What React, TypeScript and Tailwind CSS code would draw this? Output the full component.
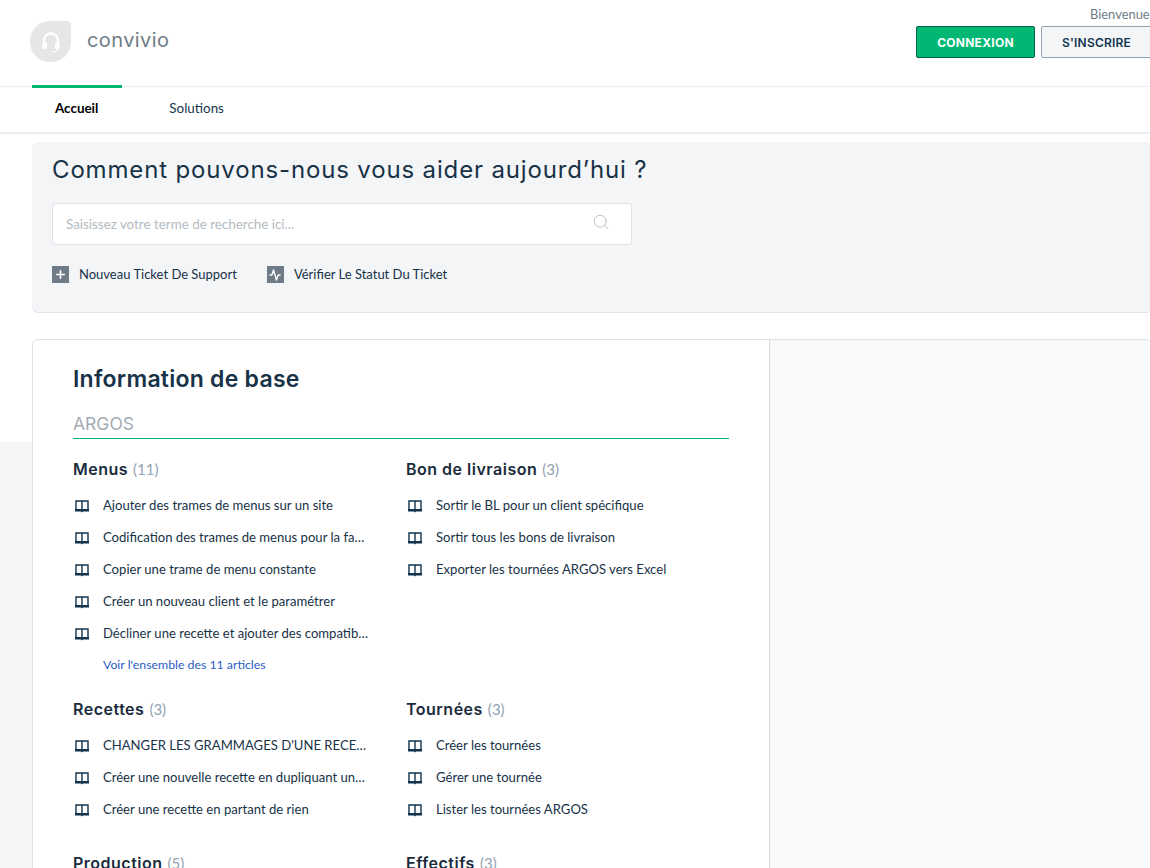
import { Plus, Search, Activity } from "lucide-react";

const body = "font-['Lato','Noto_Sans',sans-serif]";
const head = "font-['Inter','Liberation_Sans',sans-serif]";

function Book() {
  return (
    <svg width="14" height="13" viewBox="0 0 14 13" className="shrink-0 mt-[-1px]" fill="none">
      <path d="M1 1h12v9H1z" stroke="#12344d" strokeWidth="1.400" />
      <path d="M7 1v9" stroke="#12344d" strokeWidth="1.400" />
      <path d="M0 9h14v2.500H8l-1 1-1-1H0z" fill="#12344d" />
    </svg>
  );
}

function HeadsetLogo() {
  return (
    <svg width="24" height="24" viewBox="0 0 24 24" fill="none">
      <path d="M5 14V10.500a7 7 0 0 1 14 0V14" stroke="#fff" strokeWidth="2.400" />
      <rect x="3.500" y="12" width="4.500" height="7" rx="1.500" fill="#fff" />
      <rect x="16" y="12" width="4.500" height="7" rx="1.500" fill="#fff" />
      <path d="M18.500 19v1a1.500 1.500 0 0 1-1.500 1.500h-3.500" stroke="#fff" strokeWidth="1" />
    </svg>
  );
}

function Article({ text }: { text: string }) {
  return (
    <li className="flex h-8 items-center text-[13.100px] text-[#183247]">
      <span className="ml-[2px] flex w-7 shrink-0"><Book /></span>
      <span className="relative top-[-1px] w-[268px] truncate">{text}</span>
    </li>
  );
}

function Category({ title, count, items, more }: { title: string; count: number; items: string[]; more?: string }) {
  return (
    <section className="h-fit">
      <h3 className={`${head} flex h-6 items-center gap-[5px] text-[16px] font-semibold tracking-[0.5px] text-[#1a2b3c]`}>
        {title} <span className={`${body} text-[15px] font-normal tracking-normal text-[#92a2b1]`}>({count})</span>
      </h3>
      <ul className="mt-[10px]">
        {items.map((t) => <Article key={t} text={t} />)}
      </ul>
      {more && <a className="ml-[30px] block h-[22px] pt-[5px] text-[12.300px] text-[#2c5cc5]">{more}</a>}
    </section>
  );
}

export default function App() {
  return (
    <div className={`${body} h-[868px] w-[1150px] overflow-hidden bg-[linear-gradient(#ffffff_442px,#f3f5f7_442px)]`}>
      <div className="w-[1152px]">
        <header className="flex h-[87px] items-start justify-between border-b border-[#ebeff3] bg-white">
          <div className="ml-[30px] mt-[21px] flex items-center gap-[16px]">
            <div className="flex h-[41px] w-[41px] items-center justify-center rounded-[20px] rounded-tr-[4px] bg-[#e6e6e6]">
              <HeadsetLogo />
            </div>
            <span className={`${head} relative top-[-2px] text-[20px] tracking-[0.4px] text-[#6f7c87]`}>convivio</span>
          </div>
          <div className="mt-[6px] w-[236px]">
            <div className="ml-[174px] h-[20px] whitespace-nowrap text-[12.900px] leading-[16px] text-[#6f7c87]">Bienvenue</div>
            <div className="flex gap-[6px]">
              <button className={`${head} h-8 w-[119px] rounded-[2px] border border-[#065f46] bg-[#00b874] pt-[2px] text-[12px] font-bold tracking-[0.25px] text-white`}>CONNEXION</button>
              <button className={`${head} h-8 w-[111px] rounded-[2px] border border-[#92a2b1] bg-[#f3f5f7] pt-[2px] text-[12px] font-semibold tracking-[0.2px] text-[#12344d]`}>S'INSCRIRE</button>
            </div>
          </div>
        </header>

        <nav className="relative flex h-[47px] items-center border-b-2 border-[#ebeff3] bg-white pb-[2px] text-[13.400px] text-[#12344d]">
          <div className="absolute left-[32px] top-[-2px] h-[3px] w-[90px] bg-[#00b874]" />
          <a className="ml-[55px] font-bold text-black">Accueil</a>
          <a className="ml-[71px]">Solutions</a>
        </nav>

        <div className="ml-[32px] mt-[8px] h-[171px] rounded-[6px] border-b border-[#dfe3e8] bg-[#f3f5f7] pl-[20px] pt-[12px]">
          <h1 className={`${head} h-[32px] text-[24px] leading-[32px] tracking-[0.85px] text-[#183247]`}>Comment pouvons-nous vous aider aujourd’hui ?</h1>
          <div className="mt-[17px] flex h-[42px] w-[580px] items-center justify-between rounded-[4px] border border-[#dfe3e8] bg-white pl-[13px] pr-[21px] text-[13.400px] text-[#b3bbc2]">
            <span>Saisissez votre terme de recherche ici...</span>
            <Search size={18} color="#b7c1cb" strokeWidth={1.300} className="mt-[-4px]" />
          </div>
          <div className="mt-[21px] flex h-[17px] items-center text-[13px] text-[#183247]">
            <span className="flex h-[17px] w-[17px] items-center justify-center bg-[#6f7c87]"><Plus size={13} color="#fff" strokeWidth={3} /></span>
            <span className="ml-[10px]">Nouveau Ticket De Support</span>
            <span className="ml-[30px] flex h-[17px] w-[17px] items-center justify-center bg-[#6f7c87]"><Activity size={12} color="#fff" strokeWidth={2.800} /></span>
            <span className="ml-[10px]">Vérifier Le Statut Du Ticket</span>
          </div>
        </div>

        <div className="ml-[32px] mt-[26px] flex h-[600px] rounded-[6px] border border-[#dfe3e8] bg-white">
          <main className="w-[737px] border-r border-[#d8d8d8] px-[40px] pt-[24px]">
            <h2 className={`${head} h-[30px] text-[23px] font-semibold leading-[30px] tracking-[0.25px] text-[#183247]`}>Information de base</h2>
            <div className={`${head} mt-[17px] h-[28px] border-b border-[#00b874] text-[17.500px] leading-[26px] text-[#a3abb3]`}>ARGOS</div>
            <div className="mt-[18px] grid grid-cols-[333px_323px] gap-y-[24px]">
              <Category title="Menus" count={11} more="Voir l'ensemble des 11 articles" items={[
                "Ajouter des trames de menus sur un site",
                "Codification des trames de menus pour la fabrication des repas",
                "Copier une trame de menu constante",
                "Créer un nouveau client et le paramétrer",
                "Décliner une recette et ajouter des compatibilités alimentaires",
              ]} />
              <Category title="Bon de livraison" count={3} items={[
                "Sortir le BL pour un client spécifique",
                "Sortir tous les bons de livraison",
                "Exporter les tournées ARGOS vers Excel",
              ]} />
              <Category title="Recettes" count={3} items={[
                "CHANGER LES GRAMMAGES D'UNE RECETTE DE BASE",
                "Créer une nouvelle recette en dupliquant une autre",
                "Créer une recette en partant de rien",
              ]} />
              <Category title="Tournées" count={3} items={[
                "Créer les tournées",
                "Gérer une tournée",
                "Lister les tournées ARGOS",
              ]} />
              <Category title="Production" count={5} items={[]} />
              <Category title="Effectifs" count={3} items={[]} />
            </div>
          </main>
          <aside className="flex-1 rounded-r-[6px] bg-[#f8f9fb]" />
        </div>
      </div>
    </div>
  );
}
